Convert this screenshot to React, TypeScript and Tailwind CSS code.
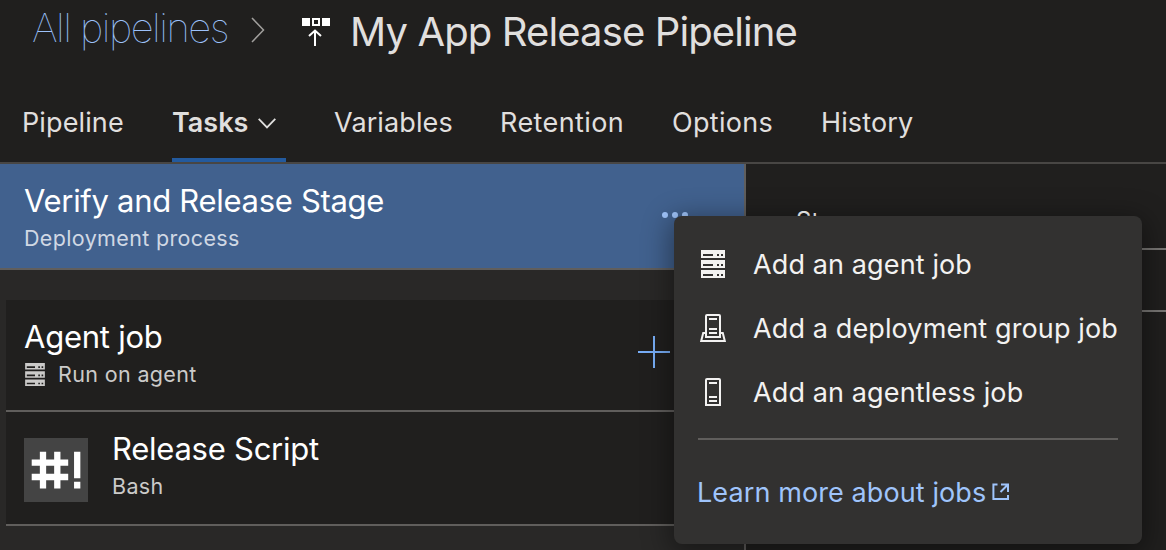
import type { ReactNode } from "react";

function ServerIcon({ className }: { className?: string }) {
  return (
    <svg viewBox="0 0 24 28" className={className} fill="currentColor" fillRule="evenodd">
      {[0, 10, 20].map((y) => (
        <path
          key={y}
          transform={`translate(0 ${y})`}
          d="M0 0H24V8H0ZM2 4V6H12V4ZM16 4V6H18V4ZM20 4V6H22V4Z"
        />
      ))}
    </svg>
  );
}

function DeploymentGroupIcon() {
  return (
    <svg viewBox="0 0 28 30" className="h-[30px] w-7" fill="none" stroke="currentColor" strokeWidth="2">
      <path d="M7 24V3a1 1 0 0 1 1-1H20a1 1 0 0 1 1 1V24Z" />
      <path d="M10 6H18M10 16H18M10 20H18" />
      <path d="M6.500 20H4.200L2.200 28H25.800L23.800 20H21.500" />
    </svg>
  );
}

function AgentlessIcon() {
  return (
    <svg viewBox="0 0 28 30" className="h-[30px] w-7" fill="none" stroke="currentColor" strokeWidth="2">
      <path d="M7 28V3a1 1 0 0 1 1-1H20a1 1 0 0 1 1 1V28Z" />
      <path d="M10 6H18M10 20H18M10 24H18" />
    </svg>
  );
}

function ReleaseIcon() {
  return (
    <svg viewBox="0 0 28 28" className="h-7 w-7 text-white" fill="none" stroke="currentColor" strokeWidth="2">
      <path d="M0 0H8V8H0ZM20 0H28V8H20Z" fill="currentColor" stroke="none" />
      <path d="M11 1H17V7H11Z" />
      <path d="M13 28V12.500M7 18L13 12.500L19 18" />
    </svg>
  );
}

function Tab({ children, className }: { children: ReactNode; className?: string }) {
  return <div className={`h-full shrink-0 whitespace-nowrap ${className ?? ""}`}>{children}</div>;
}

function MenuItem({ icon, children }: { icon: ReactNode; children: ReactNode }) {
  return (
    <div className="flex h-16 items-center">
      <div className="ml-px flex w-7 justify-center">{icon}</div>
      <span className="mt-[2px] ml-[26px] text-[27px] tracking-[0.12px] whitespace-nowrap">{children}</span>
    </div>
  );
}

export default function App() {
  return (
    <div className="relative flex h-[550px] w-[1166px] flex-col overflow-hidden bg-[#201f1e] font-[Inter,sans-serif] text-[#e0dfde]">
      <header className="flex h-[164px] shrink-0 flex-col border-b-2 border-[#484644]">
        <div className="flex h-[82px] items-start pl-8">
          <span className="mt-[4px] w-[198px] text-[40px] leading-[48px] font-[120] tracking-[-1.5px] whitespace-nowrap text-[#9cc1fa]">
            All pipelines
          </span>
          <svg viewBox="0 0 14 26" className="mt-[17px] ml-[21px] h-[26px] w-3.5" fill="none" stroke="#a19f9d" strokeWidth="1.500">
            <path d="M1 1L12.500 13L1 25" />
          </svg>
          <div className="mt-[18px] ml-[37px]">
            <ReleaseIcon />
          </div>
          <h1 className="mt-[8px] ml-5 text-[40px] leading-[48px] tracking-[-0.880px] whitespace-nowrap">My App Release Pipeline</h1>
        </div>
        <nav className="flex h-20 text-[27px] leading-[82px] tracking-[0.12px]">
          <Tab className="w-[150px] pl-[22px]">Pipeline</Tab>
          <Tab className="ml-[22px] flex w-[114px] border-b-4 border-[#235a9e]">
            <span className="w-[86px] font-semibold tracking-normal">Tasks</span>
            <svg viewBox="0 0 18 11" className="mt-[36px] h-[11px] w-[18px]" fill="none" stroke="currentColor" strokeWidth="1.800">
              <path d="M.7.9L9 9.400L17.300.9" />
            </svg>
          </Tab>
          <Tab className="ml-[48px] w-[118px]">Variables</Tab>
          <Tab className="ml-[48px] w-[123px] tracking-[0.4px]">Retention</Tab>
          <Tab className="ml-[49px] w-[101px] tracking-[0.3px]">Options</Tab>
          <Tab className="ml-[48px]">History</Tab>
        </nav>
      </header>

      <div className="flex min-h-0 flex-1">
        <aside className="flex w-[746px] shrink-0 flex-col border-r-2 border-[#605e5c] bg-[#292827]">
          <section className="flex h-[106px] shrink-0 justify-between border-b-2 border-[#605e5c] bg-[#41618e] pr-14 pl-6">
            <div>
              <div className="mt-[17px] text-[31px] leading-10 tracking-[-0.3px] whitespace-nowrap text-white">Verify and Release Stage</div>
              <div className="mt-[3px] text-[21.500px] leading-7 tracking-[0.350px] whitespace-nowrap text-[#d0d8e4]">Deployment process</div>
            </div>
            <div className="mt-12 flex gap-1">
              <i className="size-1.5 rounded-full bg-[#a0c5fb]" />
              <i className="size-1.5 rounded-full bg-[#a0c5fb]" />
              <i className="size-1.5 rounded-full bg-[#a0c5fb]" />
            </div>
          </section>

          <div className="mt-[30px] ml-1.5 bg-[#201f1e]">
            <section className="flex h-28 justify-between border-b-2 border-[#605e5c] pr-[74px] pl-[18px]">
              <div>
                <div className="mt-[17px] text-[31px] leading-10 tracking-[-0.250px] whitespace-nowrap text-white">Agent job</div>
                <div className="mt-[3px] flex items-center text-[21.500px] leading-7 tracking-[0.350px] whitespace-nowrap text-[#cbcac9]">
                  <ServerIcon className="mr-[13px] ml-px h-[23px] w-5" />
                  <span>Run on agent</span>
                </div>
              </div>
              <svg viewBox="0 0 32 32" className="mt-9 size-8" stroke="#78aef7" strokeWidth="2">
                <path d="M16 0V32M0 16H32" />
              </svg>
            </section>
            <section className="flex h-[114px] border-b-2 border-[#605e5c] pl-[18px]">
              <svg viewBox="0 0 64 64" className="mt-[26px] size-16 bg-[#444444]" fill="none" stroke="white" strokeWidth="6.300">
                <path d="M19 13.700V50.500M33.300 13.700V50.500M7.700 24.700H44.200M7.700 39H44.200" />
                <path d="M53.200 13.700V40.300M53.200 43.700V50.500" />
              </svg>
              <div className="ml-6">
                <div className="mt-[17px] text-[31px] leading-10 tracking-[-0.250px] whitespace-nowrap text-white">Release Script</div>
                <div className="mt-[3px] text-[21.500px] leading-7 tracking-[0.350px] whitespace-nowrap text-[#cbcac9]">Bash</div>
              </div>
            </section>
          </div>
        </aside>

        <main className="flex flex-1 flex-col">
          <div className="h-[84px] shrink-0 pt-[41px] pl-[50px] text-[24px] leading-8 text-white">Stage name</div>
          <div className="h-16 border-y-2 border-[#797775]" />
        </main>
      </div>

      <div className="absolute top-[216px] left-[674px] flex h-[328px] w-[468px] flex-col rounded-lg bg-[#323130] px-6 pt-4 text-[#f3f2f1] shadow-[0_6px_28px_4px_rgba(0,0,0,0.4)]">
        <MenuItem icon={<ServerIcon className="h-7 w-6" />}>Add an agent job</MenuItem>
        <MenuItem icon={<DeploymentGroupIcon />}>Add a deployment group job</MenuItem>
        <MenuItem icon={<AgentlessIcon />}>Add an agentless job</MenuItem>
        <div className="mt-[14px] h-0.5 shrink-0 bg-[#605e5c]" />
        <div className="mt-[33px] flex items-center leading-10 text-[#9fc4fb]">
          <span className="-ml-px w-[289px] text-[27px] tracking-[0.1px] whitespace-nowrap">Learn more about jobs</span>
          <svg viewBox="0 0 18 18" className="mb-[2px] ml-[6px] size-[18px] shrink-0" fill="none" stroke="currentColor" strokeWidth="2">
            <path d="M5.500 1.400H1.400V16H16V12M9 1.400H16V9M15.500 2L8.500 9" />
          </svg>
        </div>
      </div>
    </div>
  );
}
